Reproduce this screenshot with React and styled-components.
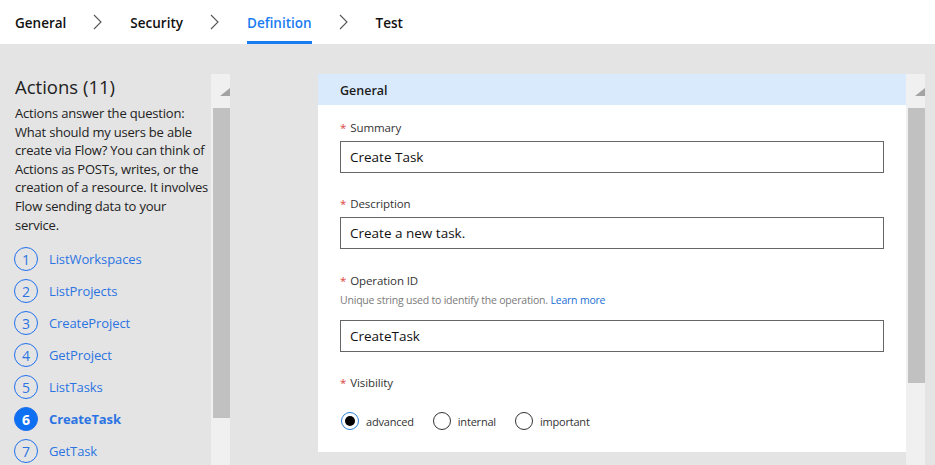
import React from 'react'
import styled, { createGlobalStyle } from 'styled-components'

const GlobalStyle = createGlobalStyle`
  html, body {
    margin: 0;
    padding: 0;
  }
  body {
    font-family: 'Open Sans', 'Noto Sans', sans-serif;
    background: #e4e4e4;
    color: #222;
  }
  * {
    box-sizing: border-box;
  }
`

const Page = styled.div`
  display: flex;
  flex-direction: column;
  height: 465px;
  overflow: hidden;
`

const TopNav = styled.nav`
  height: 44px;
  flex-shrink: 0;
  background: #fff;
  display: flex;
  align-items: stretch;
  padding-left: 15px;
`

const Step = styled.div`
  display: flex;
  align-items: center;
  padding-top: 5px;
  font-size: 13.5px;
  font-weight: 600;
  color: ${({ $active }) => ($active ? '#1a7cf2' : '#111')};
  border-bottom: 3px solid ${({ $active }) => ($active ? '#1a7cf2' : 'transparent')};
`

const Chevron = styled.svg`
  align-self: center;
  margin: 0 28px 0 27px;
  flex-shrink: 0;
`

const Body = styled.div`
  flex: 1;
  min-height: 0;
  display: flex;
  padding-top: 30px;
`

const Sidebar = styled.aside`
  width: 211px;
  flex-shrink: 0;
  padding-left: 15px;
  overflow: hidden;
`

const SideTitle = styled.h2`
  margin: 0;
  font-size: 18.5px;
  font-weight: 400;
  line-height: 26px;
  color: #222;
`

const SideText = styled.p`
  margin: 4px 0 0;
  font-size: 13px;
  line-height: 18.6px;
  letter-spacing: -0.2px;
  color: #222;
`

const ActionList = styled.ol`
  list-style: none;
  margin: 9px 0 0;
  padding: 0;
  margin-left: -1px;
`

const ActionItem = styled.li`
  display: flex;
  align-items: center;
  height: 32px;
  gap: 11px;
  font-size: 13px;
  letter-spacing: -0.1px;
  color: #2b74e2;
  font-weight: ${({ $active }) => ($active ? 700 : 400)};
`

const Badge = styled.span`
  width: 24px;
  height: 24px;
  border-radius: 50%;
  border: 1.5px solid #1f70ec;
  background: ${({ $active }) => ($active ? '#0d6ff2' : 'transparent')};
  color: ${({ $active }) => ($active ? '#fff' : '#2b74e2')};
  font-size: 14px;
  font-weight: ${({ $active }) => ($active ? 700 : 400)};
  display: flex;
  align-items: center;
  justify-content: center;
  flex-shrink: 0;
`

const Scrollbar = styled.div`
  width: 19px;
  flex-shrink: 0;
  background: #f0f0f0;
  display: flex;
  flex-direction: column;
  align-items: flex-end;
`

const ScrollArrow = styled.div`
  height: 34px;
  padding-top: 14px;
  display: flex;
  justify-content: flex-end;
  width: 100%;
`

const Thumb = styled.div`
  width: 17px;
  height: ${({ $h }) => $h}px;
  background: #c1c1c1;
`

const Main = styled.main`
  margin-left: 88px;
  width: 588px;
  flex-shrink: 0;
`

const Card = styled.section`
  background: #fff;
  height: 378px;
`

const CardHeader = styled.header`
  height: 31px;
  background: #d9eafc;
  padding-left: 22px;
  padding-top: 2px;
  display: flex;
  align-items: center;
  font-size: 12.5px;
  font-weight: 600;
  color: #1b1b1b;
`

const CardBody = styled.div`
  padding: 15px 22px 0;
`

const Field = styled.div`
  margin-bottom: ${({ $gap }) => $gap}px;
`

const Label = styled.div`
  font-size: 11.5px;
  line-height: 16px;
  letter-spacing: -0.1px;
  color: #333;
  margin-bottom: ${({ $gap }) => $gap}px;
`

const Req = styled.span`
  color: #e0433d;
  margin-right: 4px;
`

const Hint = styled.div`
  font-size: 10.5px;
  line-height: 16px;
  letter-spacing: -0.2px;
  color: #7a7a7a;
  margin-bottom: 12px;
`

const HintLink = styled.a`
  color: #1a6fd4;
  text-decoration: none;
`

const TextBox = styled.div`
  height: 32px;
  border: 1px solid #666;
  padding-left: 9px;
  display: flex;
  align-items: center;
  font-size: 13.5px;
  color: #111;
`

const RadioRow = styled.div`
  display: flex;
  align-items: center;
  height: 20px;
  margin-left: 1px;
`

const RadioOption = styled.label`
  display: flex;
  align-items: center;
  gap: 7px;
  margin-right: 19px;
  font-size: 11px;
  letter-spacing: -0.2px;
  color: #333;
`

const RadioCircle = styled.span`
  width: 18px;
  height: 18px;
  border-radius: 50%;
  border: 1px solid ${({ $checked }) => ($checked ? '#2a7fd4' : '#333')};
  display: flex;
  align-items: center;
  justify-content: center;
  &::after {
    content: '';
    width: 10px;
    height: 10px;
    border-radius: 50%;
    background: ${({ $checked }) => ($checked ? '#000' : 'transparent')};
  }
`

const steps = ['General', 'Security', 'Definition', 'Test']
const actions = ['ListWorkspaces', 'ListProjects', 'CreateProject', 'GetProject', 'ListTasks', 'CreateTask', 'GetTask']

const UpArrow = () => (
  <svg width="10" height="8" viewBox="0 0 10 8">
    <polygon points="0,8 10,0 10,8" fill="#a3a3a3" />
  </svg>
)

const ScrollBar = ({ thumb }) => (
  <Scrollbar>
    <ScrollArrow>
      <UpArrow />
    </ScrollArrow>
    <Thumb $h={thumb} />
  </Scrollbar>
)

const App = () => {
  return (
    <Page>
      <GlobalStyle />
      <TopNav>
        {steps.map((s, i) => (
          <React.Fragment key={s}>
            <Step $active={s === 'Definition'}>{s}</Step>
            {i < steps.length - 1 && (
              <Chevron width="9" height="16" viewBox="0 0 9 16">
                <polyline points="1,1 8,8 1,15" fill="none" stroke="#555" strokeWidth="1.1" />
              </Chevron>
            )}
          </React.Fragment>
        ))}
      </TopNav>
      <Body>
        <Sidebar>
          <SideTitle>Actions (11)</SideTitle>
          <SideText>
            Actions answer the question: What should my users be able create via Flow? You can think of
            Actions as POSTs, writes, or the creation of a resource. It involves Flow sending data to your
            service.
          </SideText>
          <ActionList>
            {actions.map((a, i) => (
              <ActionItem key={a} $active={a === 'CreateTask'}>
                <Badge $active={a === 'CreateTask'}>{i + 1}</Badge>
                {a}
              </ActionItem>
            ))}
          </ActionList>
        </Sidebar>
        <ScrollBar thumb={310} />
        <Main>
          <Card>
            <CardHeader>General</CardHeader>
            <CardBody>
              <Field $gap={23}>
                <Label $gap={5}><Req>*</Req>Summary</Label>
                <TextBox>Create Task</TextBox>
              </Field>
              <Field $gap={24}>
                <Label $gap={5}><Req>*</Req>Description</Label>
                <TextBox>Create a new task.</TextBox>
              </Field>
              <Field $gap={23}>
                <Label $gap={3}><Req>*</Req>Operation ID</Label>
                <Hint>
                  Unique string used to identify the operation. <HintLink>Learn more</HintLink>
                </Hint>
                <TextBox>CreateTask</TextBox>
              </Field>
              <Field $gap={0}>
                <Label $gap={20}><Req>*</Req>Visibility</Label>
                <RadioRow>
                  <RadioOption><RadioCircle $checked />advanced</RadioOption>
                  <RadioOption><RadioCircle />internal</RadioOption>
                  <RadioOption><RadioCircle />important</RadioOption>
                </RadioRow>
              </Field>
            </CardBody>
          </Card>
        </Main>
        <ScrollBar thumb={275} />
      </Body>
    </Page>
  )
}

export default App
